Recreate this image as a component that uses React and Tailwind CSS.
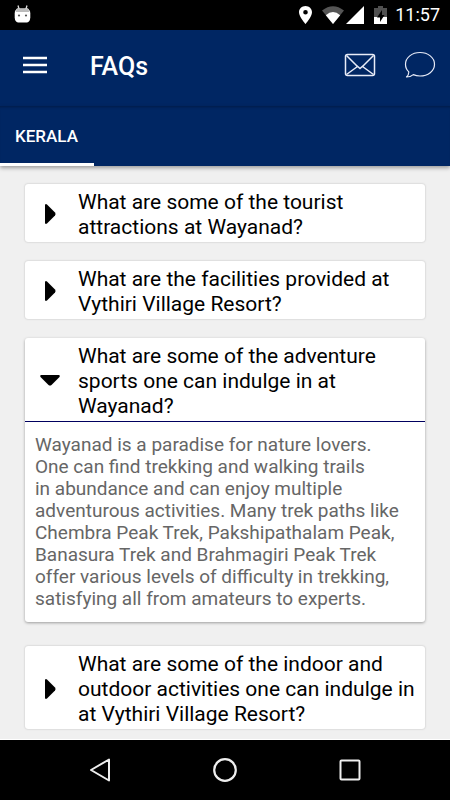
import { useState } from "react";

const faqs = [
  { q: "What are some of the tourist attractions at Wayanad?" },
  { q: "What are the facilities provided at Vythiri Village Resort?" },
  {
    q: "What are some of the adventure sports one can indulge in at Wayanad?",
    a: "Wayanad is a paradise for nature lovers.\nOne can find trekking and walking trails\nin abundance and can enjoy multiple adventurous activities. Many trek paths like Chembra Peak Trek, Pakshipathalam Peak, Banasura Trek and Brahmagiri Peak Trek offer various levels of difficulty in trekking, satisfying all from amateurs to experts.",
  },
  { q: "What are some of the indoor and outdoor activities one can indulge in at Vythiri Village Resort?" },
];

function StatusBar() {
  return (
    <div className="flex h-[30px] items-center bg-black pl-[14px] pr-[10px] text-white">
      {/* debug robot */}
      <svg width="17" height="20" viewBox="0 0 17 20">
        <path d="M4 0.500l1.500 5M13 0.500l-1.500 5" stroke="#ddd" strokeWidth="1.300" />
        <path d="M3 3.500h11q2 1.500 2.300 5v4q-.3 4.500-3.300 5H4q-3-.5-3.300-5v-4Q1 5 3 3.500z" fill="#fff" />
        <path d="M3 3.500h11l1.500 3.500h-14z" fill="#bbb" />
        <circle cx="5" cy="10.500" r="1.100" fill="#555" />
        <circle cx="12" cy="10.500" r="1.100" fill="#555" />
      </svg>
      <div className="ml-auto flex items-center">
        {/* location */}
        <svg width="13" height="18" viewBox="0 0 13 18" fill="#fff">
          <path fillRule="evenodd" d="M6.500 0C2.900 0 0 2.800 0 6.300 0 11 6.500 18 6.500 18S13 11 13 6.300C13 2.800 10.100 0 6.500 0zm0 4a2.300 2.300 0 110 4.600 2.300 2.300 0 010-4.600z" />
        </svg>
        {/* wifi */}
        <svg className="ml-[10px]" width="22" height="18" viewBox="0 0 22 18">
          <path d="M0 4.500Q11-4 22 4.500L11 18z" fill="#555" />
          <path d="M3.800 9.200Q11 3 18.200 9.200L11 18z" fill="#fff" />
        </svg>
        {/* signal */}
        <svg className="ml-[2px]" width="18" height="18" viewBox="0 0 18 18">
          <path d="M18 0v18H0z" fill="#fff" />
        </svg>
        {/* battery */}
        <svg className="ml-[10px]" width="13" height="18" viewBox="0 0 13 18">
          <path d="M4 0h5v2h4v9H0V2h4z" fill="#505050" />
          <path d="M0 11h13v7H0z" fill="#fff" />
          <path d="M8 4l-5 7.500h3V16l4.500-7H8z" fill="#000" />
        </svg>
        <span className="ml-[8px] text-[18px] leading-[30px]">11:57</span>
      </div>
    </div>
  );
}

function Toolbar() {
  return (
    <header className="flex h-[76px] items-center bg-[#002663] pb-[6px] pl-[23px] pr-[14px] text-white">
      <button aria-label="Menu">
        <svg width="24" height="18" viewBox="0 0 24 18">
          <path d="M0 2h24M0 9h24M0 16h24" stroke="#fff" strokeWidth="2.400" />
        </svg>
      </button>
      <h1 className="ml-[43px] mt-[4px] text-[25px] font-medium leading-[30px]">FAQs</h1>
      <div className="ml-auto flex items-center gap-[28px]">
        <button aria-label="Mail">
          <svg width="32" height="24" viewBox="0 0 32 24" fill="none" stroke="#e8ecf8" strokeWidth="1.500">
            <rect x="1.500" y="1.500" width="29" height="21" rx="2" />
            <path d="M2.500 2.500l11 11M29.500 2.500l-11 11M11.500 11.500l4.500 4 4.500-4M2.500 21.500l11-8M29.500 21.500l-11-8" />
          </svg>
        </button>
        <button aria-label="Chat">
          <svg width="32" height="28" viewBox="0 0 32 28" fill="none" stroke="#e8ecf8" strokeWidth="1.200" strokeLinejoin="round">
            <path d="M16 1.500c8 0 14.500 5 14.500 11.800S24 25 16 25c-2.500 0-4.700-.5-6.700-1.400-1.800 1.500-4 2.400-6.800 2.400 1.500-1.300 2.300-2.900 2.300-5.100C2.600 18.900 1.500 16.200 1.500 13.300 1.500 6.500 8 1.500 16 1.500z" />
          </svg>
        </button>
      </div>
    </header>
  );
}

function Arrow({ open }) {
  return open ? (
    <svg width="22" height="13" viewBox="0 0 22 13">
      <path d="M2 1h18q1.500 0.500 0.500 2l-8 8q-1.500 1.200-3 0l-8-8q-1-1.500 0.500-2z" />
    </svg>
  ) : (
    <svg width="13" height="22" viewBox="0 0 13 22">
      <path d="M1 2q0.500-1.500 2-0.500l8 8q1.200 1.500 0 3l-8 8q-1.500 1-2-0.500z" />
    </svg>
  );
}

function FaqCard({ item, open, onToggle }) {
  return (
    <li className={open ? "mb-[5px] rounded-[3px] bg-white shadow-[0_1px_3px_rgba(0,0,0,0.35)]" : "rounded-[3px] bg-white shadow-[0_0_2px_rgba(0,0,0,0.25)]"}>
      <button onClick={onToggle} aria-expanded={open} className="flex w-full items-center pb-[2px] pt-[6px] text-left text-black">
        <span className="flex w-[50px] shrink-0 justify-center pb-[2px]">
          <Arrow open={open} />
        </span>
        <span className="ml-[3px] text-[21px] leading-[25px]">{item.q}</span>
      </button>
      {open && item.a && (
        <p className="whitespace-pre-line border-t border-[#00005f] px-[10px] py-[12px] text-[19px] leading-[22px] text-[#666]">
          {item.a}
        </p>
      )}
    </li>
  );
}

function NavBar() {
  return (
    <nav className="grid h-[60px] grid-cols-3 place-items-center bg-black px-[38px]">
      <button aria-label="Back">
        <svg width="24" height="26" viewBox="0 0 24 26" fill="none" stroke="#eee" strokeWidth="2" strokeLinejoin="round">
          <path d="M21 2.500v21L3 13z" />
        </svg>
      </button>
      <button aria-label="Home">
        <svg width="26" height="26" viewBox="0 0 26 26" fill="none" stroke="#eee" strokeWidth="2.200">
          <circle cx="13" cy="13" r="10.800" />
        </svg>
      </button>
      <button aria-label="Recent apps">
        <svg width="24" height="24" viewBox="0 0 24 24" fill="none" stroke="#eee" strokeWidth="2">
          <rect x="2.500" y="2.500" width="19" height="19" rx="1" />
        </svg>
      </button>
    </nav>
  );
}

export default function App() {
  const [openIndex, setOpenIndex] = useState(2);

  return (
    <div className="flex min-h-screen flex-col bg-[#f0f0f0] font-[Roboto,sans-serif]">
      <StatusBar />
      <Toolbar />
      {/* tabs */}
      <div className="flex h-[60px] bg-[#002663] shadow-[0_2px_4px_rgba(0,0,0,0.35),inset_0_3px_3px_-2px_rgba(0,0,0,0.3)]">
        <button className="border-b-[3px] border-white px-4 pl-[15px] pt-[5px] text-[17px] font-medium text-white">KERALA</button>
      </div>
      <main className="flex-1 border-b border-white px-[25px] pt-[18px]">
        <ul className="flex flex-col gap-[19px]">
          {faqs.map((item, i) => (
            <FaqCard key={i} item={item} open={i === openIndex} onToggle={() => setOpenIndex(i === openIndex ? -1 : i)} />
          ))}
        </ul>
      </main>
      <NavBar />
    </div>
  );
}
